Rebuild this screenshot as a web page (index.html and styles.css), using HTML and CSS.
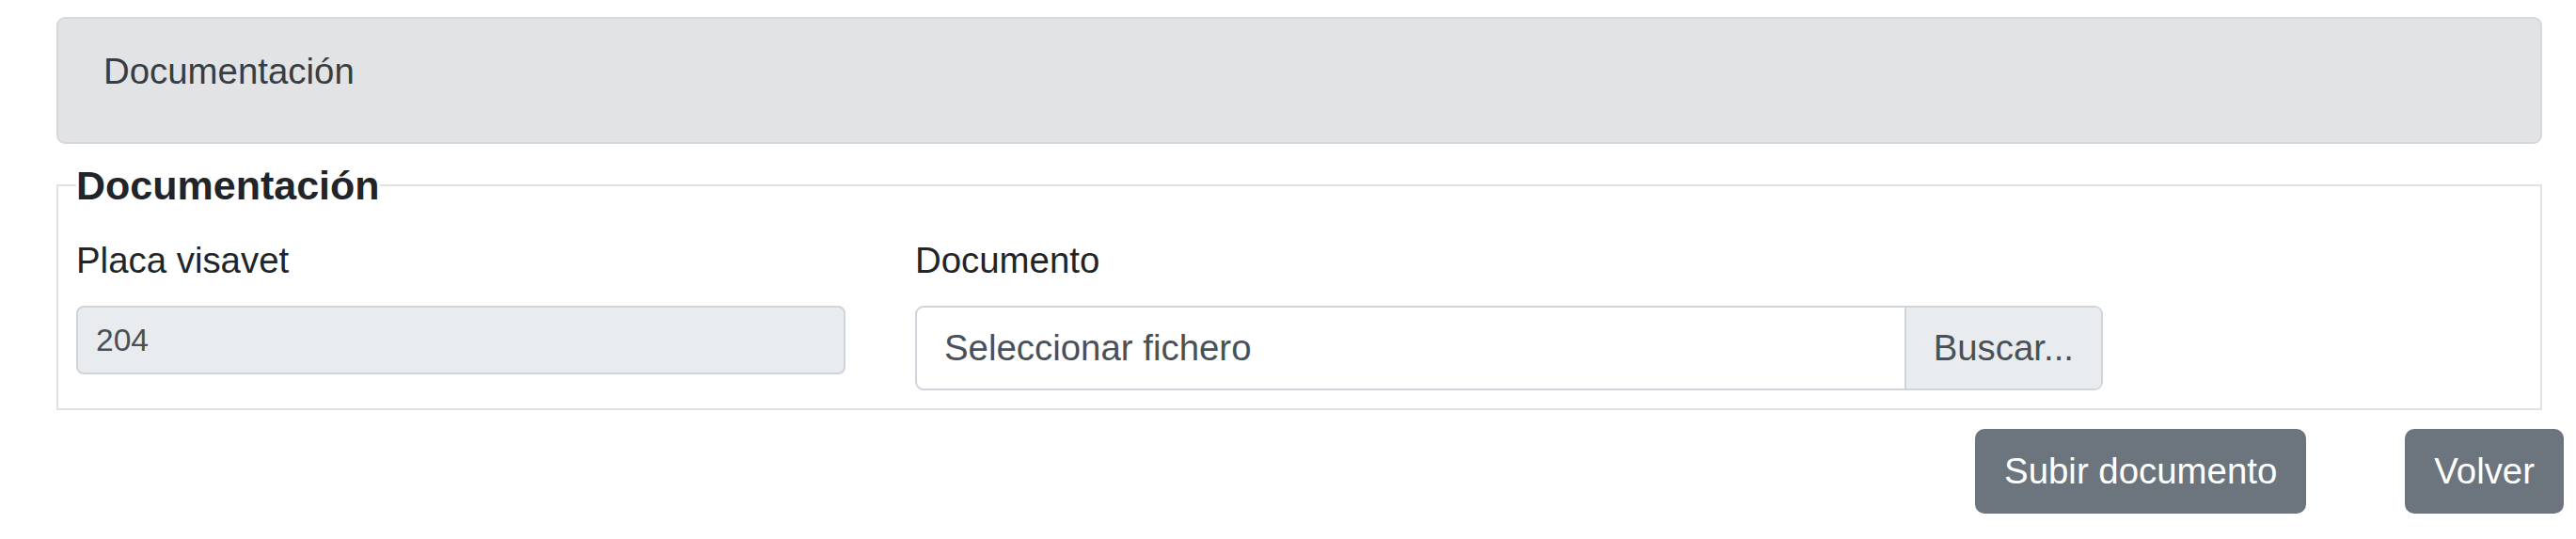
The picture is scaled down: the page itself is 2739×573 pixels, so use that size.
FILE: index.html
```html
<!DOCTYPE html>
<html lang="es">
<head>
<meta charset="utf-8">
<title>Documentación</title>
<link rel="stylesheet" href="styles.css">
</head>
<body>
<div class="page">
  <div class="alert">Documentación</div>
  <fieldset class="docs">
    <legend class="docs-legend">Documentación</legend>
    <div class="form-row">
      <div class="col col-placa">
        <label class="lbl" for="placa">Placa visavet</label>
        <input class="ctrl-sm" id="placa" type="text" value="204" readonly>
      </div>
      <div class="col col-doc">
        <label class="lbl">Documento</label>
        <div class="file">
          <span class="file-label">Seleccionar fichero</span>
          <span class="file-btn">Buscar...</span>
        </div>
      </div>
    </div>
  </fieldset>
  <div class="actions">
    <button class="btn" type="button">Subir documento</button>
    <button class="btn" type="button">Volver</button>
  </div>
</div>
</body>
</html>
```

FILE: styles.css
```css
* { box-sizing: border-box; }

html, body {
  margin: 0;
  background: #ffffff;
}

body {
  font-family: "Liberation Sans", Arial, sans-serif;
  font-size: 38.4px;
  line-height: 57.6px;
  color: #212529;
}

.page {
  padding: 18px 36px 0 60px;
}

.alert {
  background: #e2e3e5;
  border: 2px solid #d6d8db;
  border-radius: 9px;
  color: #383d41;
  padding: 27px 48px 46px;
  font-size: 38.4px;
  line-height: 57.6px;
}

.docs {
  margin: 19px 0 0;
  padding: 0 19px 19px;
  border: 2px solid #dee2e6;
  min-inline-size: 0;
}

.docs-legend {
  padding: 0;
  font-size: 43px;
  line-height: 51px;
  font-weight: bold;
  color: #212529;
}

.form-row {
  display: flex;
  gap: 74px;
  margin-top: 25px;
}

.col {
  display: flex;
  flex-direction: column;
}

.col-placa { width: 818px; }
.col-doc { width: 1263px; }

.lbl {
  display: block;
  font-size: 38.4px;
  line-height: 57.6px;
  margin-bottom: 20px;
  color: #212529;
}

.ctrl-sm {
  display: block;
  width: 100%;
  height: 73px;
  margin: 0;
  padding: 0 19px;
  font-family: "Liberation Sans", Arial, sans-serif;
  font-size: 33.6px;
  color: #495057;
  background: #e9ecef;
  border: 2px solid #ced4da;
  border-radius: 8px;
  outline: none;
}

.file {
  display: flex;
  height: 90px;
  border: 2px solid #ced4da;
  border-radius: 9px;
  overflow: hidden;
  background: #ffffff;
  color: #495057;
}

.file-label {
  flex: 1;
  padding: 0 29px;
  line-height: 86px;
  white-space: nowrap;
}

.file-btn {
  padding: 0 29px;
  line-height: 86px;
  background: #e9ecef;
  border-left: 2px solid #ced4da;
  white-space: nowrap;
}

.actions {
  display: flex;
  justify-content: flex-end;
  gap: 105px;
  margin: 20px -23px 0 0;
}

.btn {
  height: 90px;
  padding: 0 29px;
  font-family: "Liberation Sans", Arial, sans-serif;
  font-size: 38.4px;
  line-height: 86px;
  color: #ffffff;
  background: #6c757d;
  border: 2px solid #6c757d;
  border-radius: 10px;
}
```
